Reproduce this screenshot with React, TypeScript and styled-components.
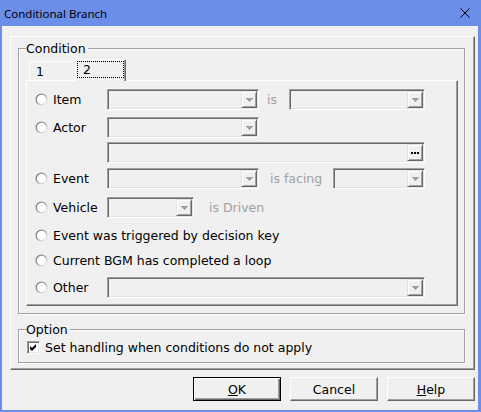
import React from "react";
import styled, { createGlobalStyle, css } from "styled-components";

const UI_FONT = `"DejaVu Sans", "Liberation Sans", sans-serif`;

const GlobalStyle = createGlobalStyle`
  html, body { margin: 0; padding: 0; background: #f0f0f0; }
  body { font-family: ${UI_FONT}; }
  *, *::before, *::after { box-sizing: border-box; }
`;

const Window = styled.div`
  width: 481px;
  height: 412px;
  background: #6b8ee9;
  padding: 0 3px 2px 2px;
  display: flex;
  flex-direction: column;
  font-family: ${UI_FONT};
  font-size: 12.5px;
  color: #000;
`;

const TitleBar = styled.div`
  flex: none;
  height: 26px;
  display: flex;
  align-items: center;
  justify-content: space-between;
  padding: 0 8px 0 2px;
  font-family: "Noto Sans", "Open Sans", sans-serif;
  font-size: 11.5px;
  color: #000;
`;

const Client = styled.div`
  flex: 1;
  background: #f0f0f0;
  display: flex;
  flex-direction: column;
  padding: 10px 3px 0 8px;
`;

const OuterPanel = styled.div`
  border: 1px solid;
  border-color: #fff #696969 #696969 #fff;
  box-shadow: inset -1px -1px 0 #a0a0a0;
  padding: 4px 9px 6px 7px;
  display: flex;
  flex-direction: column;
`;

const GroupBox = styled.fieldset<{ $mt: number; $pb: number }>`
  margin: ${(p) => p.$mt}px 0 0 0;
  min-width: 0;
  border: 1px solid #a0a0a0;
  box-shadow: 1px 1px 0 #fff, inset 1px 1px 0 #fff;
  padding: 3px 6px ${(p) => p.$pb}px 7px;
`;

const GroupTitle = styled.legend`
  padding: 0 2px 0 0;
  line-height: 15px;
  background: #f0f0f0;
`;

const TabStrip = styled.div`
  height: 21px;
  display: flex;
  align-items: flex-end;
  padding-left: 3px;
`;

const Tab = styled.div<{ $active?: boolean }>`
  flex: none;
  width: 48px;
  height: 19px;
  border-top: 1px solid #fff;
  border-left: 1px solid #fff;
  border-right: 1px solid #a0a0a0;
  background: #f0f0f0;
  display: flex;
  align-items: center;
  padding-left: 6px;
  ${(p) =>
    p.$active &&
    css`
      position: relative;
      z-index: 1;
      width: 51px;
      height: 22px;
      margin-left: -2px;
      margin-bottom: -1px;
      align-items: flex-start;
      padding-left: 0;
      border-right: 1px solid #696969;
      box-shadow: inset -1px 0 0 #a0a0a0;
    `}
`;

const FocusRect = styled.span`
  display: flex;
  align-items: center;
  width: 47px;
  height: 17px;
  margin: 1px 0 0 1px;
  padding-left: 5px;
  border: 1px dotted #000;
`;

const TabPanel = styled.div`
  border: 1px solid;
  border-color: #fff #696969 #696969 #fff;
  box-shadow: inset -1px -1px 0 #a0a0a0;
  padding: 8px 0 7px 8px;
  display: flex;
  flex-direction: column;
`;

const Row = styled.div<{ $mt: number }>`
  display: flex;
  align-items: center;
  height: 21px;
  margin-top: ${(p) => p.$mt}px;
`;

const OptionText = styled.span<{ $w?: number }>`
  margin-left: 5px;
  white-space: nowrap;
  ${(p) =>
    p.$w !== undefined &&
    css`
      flex: none;
      width: ${p.$w}px;
    `}
`;

const Caption = styled.span<{ $w?: number; $pl: number }>`
  flex: none;
  color: #a0a0a0;
  white-space: nowrap;
  padding-left: ${(p) => p.$pl}px;
  ${(p) =>
    p.$w !== undefined &&
    css`
      width: ${p.$w}px;
    `}
`;

const Field = styled.div<{ $w: number; $ml?: number }>`
  flex: none;
  width: ${(p) => p.$w}px;
  height: 21px;
  margin-left: ${(p) => p.$ml ?? 0}px;
  border: 1px solid;
  border-color: #a0a0a0 #fff #fff #a0a0a0;
  box-shadow: inset 1px 1px 0 #696969, inset -1px -1px 0 #e3e3e3;
  background: #f0f0f0;
  padding: 1px;
  display: flex;
  justify-content: flex-end;
`;

const FieldButton = styled.div`
  width: 16px;
  height: 100%;
  border: 1px solid;
  border-color: #e3e3e3 #696969 #696969 #e3e3e3;
  box-shadow: inset 1px 1px 0 #fff, inset -1px -1px 0 #a0a0a0;
  background: #f0f0f0;
  display: flex;
  align-items: center;
  justify-content: center;
`;

const CheckRow = styled.label`
  display: flex;
  align-items: center;
  height: 15px;
  margin-left: 1px;
`;

const CheckBox = styled.span`
  flex: none;
  width: 13px;
  height: 13px;
  background: #fff;
  border: 1px solid;
  border-color: #a0a0a0 #fff #fff #a0a0a0;
  box-shadow: inset 1px 1px 0 #696969, inset -1px -1px 0 #e3e3e3;
  display: flex;
  align-items: center;
  justify-content: center;
`;

const CheckText = styled.span`
  margin-left: 5px;
  white-space: nowrap;
`;

const ButtonRow = styled.div`
  display: flex;
  justify-content: flex-end;
  gap: 9px;
  margin-top: 7px;
`;

const PushButton = styled.button<{ $default?: boolean }>`
  width: 88px;
  height: 24px;
  padding: 0;
  font: inherit;
  color: #000;
  background: #f0f0f0;
  border: 1px solid;
  border-color: #fff #696969 #696969 #fff;
  box-shadow: inset -1px -1px 0 #a0a0a0;
  ${(p) =>
    p.$default &&
    css`
      border-color: #000;
      box-shadow: inset 1px 1px 0 #fff, inset -1px -1px 0 #696969,
        inset -2px -2px 0 #a0a0a0;
    `}
`;

const Mark = styled.svg`
  flex: none;
  display: block;
`;

function Radio() {
  return (
    <Mark width={13} height={13} viewBox="0 0 13 13">
      <defs>
        <linearGradient id="radioRing" x1="0" y1="0" x2="1" y2="1">
          <stop offset="0" stopColor="#6e6e6e" />
          <stop offset="0.5" stopColor="#a8a8a8" />
          <stop offset="1" stopColor="#ffffff" />
        </linearGradient>
      </defs>
      <circle cx="6.5" cy="6.5" r="5.4" fill="#fff" stroke="url(#radioRing)" strokeWidth="1.4" />
    </Mark>
  );
}

function Arrow() {
  return (
    <Mark width={7} height={4} viewBox="0 0 7 4">
      <path d="M0 0h7v1H0z M1 1h5v1H1z M2 2h3v1H2z M3 3h1v1H3z" fill="#a0a0a0" />
    </Mark>
  );
}

function Dots() {
  return (
    <Mark width={8} height={2} viewBox="0 0 8 2">
      <path d="M0 0h2v2H0z M3 0h2v2H3z M6 0h2v2H6z" fill="#000" />
    </Mark>
  );
}

function Combo({ w, ml }: { w: number; ml?: number }) {
  return (
    <Field $w={w} $ml={ml}>
      <FieldButton>
        <Arrow />
      </FieldButton>
    </Field>
  );
}

export default function App() {
  return (
    <>
      <GlobalStyle />
      <Window>
        <TitleBar>
          <span>Conditional Branch</span>
          <Mark width={10} height={10} viewBox="0 0 10 10">
            <path d="M0.5 0.5L9.5 9.5M9.5 0.5L0.5 9.5" stroke="#000" strokeWidth="1" />
          </Mark>
        </TitleBar>
        <Client>
          <OuterPanel>
            <GroupBox $mt={0} $pb={7}>
              <GroupTitle>Condition</GroupTitle>
              <TabStrip>
                <Tab>1</Tab>
                <Tab $active>
                  <FocusRect>2</FocusRect>
                </Tab>
              </TabStrip>
              <TabPanel>
                <Row $mt={0}>
                  <Radio />
                  <OptionText $w={54}>Item</OptionText>
                  <Combo w={152} />
                  <Caption $w={30} $pl={8}>is</Caption>
                  <Combo w={136} />
                </Row>
                <Row $mt={7}>
                  <Radio />
                  <OptionText $w={54}>Actor</OptionText>
                  <Combo w={152} />
                </Row>
                <Row $mt={4}>
                  <Field $w={318} $ml={72}>
                    <FieldButton>
                      <Dots />
                    </FieldButton>
                  </Field>
                </Row>
                <Row $mt={5}>
                  <Radio />
                  <OptionText $w={54}>Event</OptionText>
                  <Combo w={152} />
                  <Caption $w={74} $pl={11}>is facing</Caption>
                  <Combo w={92} />
                </Row>
                <Row $mt={8}>
                  <Radio />
                  <OptionText $w={54}>Vehicle</OptionText>
                  <Combo w={87} />
                  <Caption $pl={15}>is Driven</Caption>
                </Row>
                <Row $mt={7}>
                  <Radio />
                  <OptionText>Event was triggered by decision key</OptionText>
                </Row>
                <Row $mt={4}>
                  <Radio />
                  <OptionText>Current BGM has completed a loop</OptionText>
                </Row>
                <Row $mt={6}>
                  <Radio />
                  <OptionText $w={54}>Other</OptionText>
                  <Combo w={318} />
                </Row>
              </TabPanel>
            </GroupBox>
            <GroupBox $mt={8} $pb={7}>
              <GroupTitle>Option</GroupTitle>
              <CheckRow>
                <CheckBox>
                  <Mark width={7} height={7} viewBox="0 0 7 7">
                    <path d="M0 2L2 4L6 0V3L2 7L0 5Z" fill="#000" />
                  </Mark>
                </CheckBox>
                <CheckText>Set handling when conditions do not apply</CheckText>
              </CheckRow>
            </GroupBox>
          </OuterPanel>
          <ButtonRow>
            <PushButton $default>
              <u>O</u>K
            </PushButton>
            <PushButton>Cancel</PushButton>
            <PushButton>
              <u>H</u>elp
            </PushButton>
          </ButtonRow>
        </Client>
      </Window>
    </>
  );
}
